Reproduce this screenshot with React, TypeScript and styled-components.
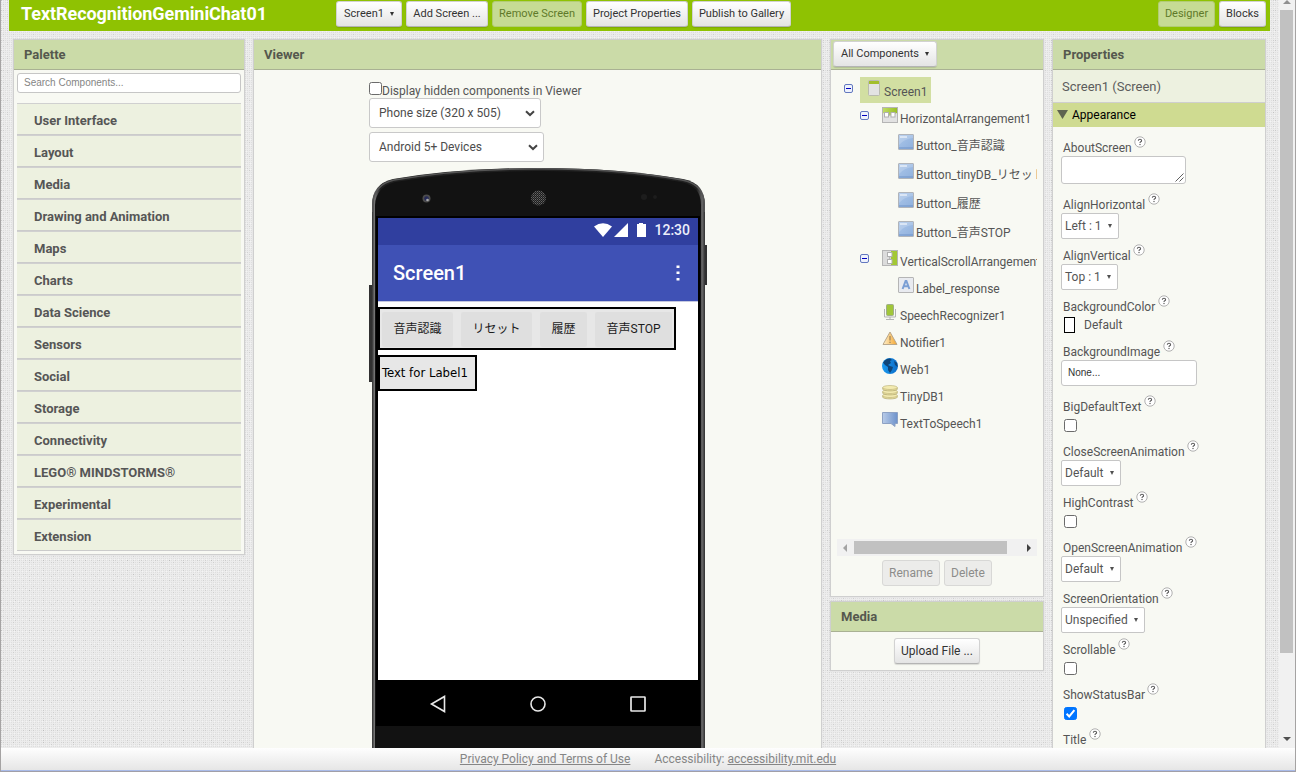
import React from "react";
import styled, { createGlobalStyle, css } from "styled-components";

const Global = createGlobalStyle`
  * { box-sizing: border-box; }
  body { margin: 0; overflow: hidden; font-family: Roboto, "Noto Sans CJK JP", sans-serif; font-size: 12px; color: #555; }
`;

const Frame = styled.div`
  display: flex;
  flex-direction: column;
  width: 1296px;
  height: 772px;
  border-left: 1px solid #a5a3a3;
  border-right: 1px solid #a5a3a3;
  border-bottom: 1px solid #a19fa8;
  overflow: hidden;
`;

const dot = (color: string) => `linear-gradient(${color}, ${color})`;

const Workspace = styled.div`
  display: flex;
  justify-content: space-between;
  height: 748px;
  flex: none;
  overflow: hidden;
  background-color: #ececec;
  background-image:
    radial-gradient(circle at 0.5px 0.5px, rgba(0, 0, 0, 0.09) 0.6px, transparent 0.7px),
    radial-gradient(circle at 0.5px 0.5px, rgba(0, 0, 0, 0.06) 0.6px, transparent 0.7px),
    radial-gradient(circle at 2.5px 4.5px, rgba(0, 0, 0, 0.07) 0.6px, transparent 0.7px),
    radial-gradient(circle at 6.5px 2.5px, rgba(0, 0, 0, 0.08) 0.6px, transparent 0.7px),
    radial-gradient(circle at 0.5px 0.5px, rgba(0, 0, 0, 0.06) 0.6px, transparent 0.7px),
    radial-gradient(circle at 1.5px 1.5px, rgba(255, 255, 255, 0.4) 0.6px, transparent 0.7px);
  background-size: 14px 10px, 6px 14px, 10px 6px, 22px 14px, 2px 2px, 4px 6px;
`;

const Page = styled.div`
  width: 1261px;
  margin-left: 8px;
`;

const TopBar = styled.header`
  display: flex;
  height: 31px;
  padding: 1px 4px 0 12px;
  background: #8fc202;
`;

const ProjectName = styled.h1`
  width: 315px;
  margin: 0;
  font-size: 18px;
  line-height: 26px;
  font-weight: 700;
  letter-spacing: -0.07px;
  color: #fff;
  white-space: nowrap;
`;

const ButtonGroup = styled.div<{ $end?: boolean }>`
  display: flex;
  gap: 4px;
  ${(p) => p.$end && css`margin-left: auto;`}
`;

const PushButton = styled.button<{ $w: number; $tone?: "green" | "gray"; $size?: number }>`
  display: flex;
  align-items: center;
  justify-content: center;
  gap: 6px;
  width: ${(p) => p.$w}px;
  height: 26px;
  padding: 0 0 1px;
  border: 1px solid #d2d2d2;
  border-bottom-color: #b4b4b4;
  border-radius: 3px;
  background: linear-gradient(#ffffff, #e4e4e4);
  box-shadow: 0 1px 1px rgba(0, 0, 0, 0.12);
  color: #333;
  font: ${(p) => p.$size ?? 11}px Roboto, sans-serif;
  white-space: nowrap;
  ${(p) => p.$tone === "green" && css`
    background: #c6db94; border-color: #b2cc74; color: #5f7a2a; box-shadow: none;
  `}
  ${(p) => p.$tone === "gray" && css`
    background: #ececea; border-color: #d8d8d6; color: #8c8c8a; box-shadow: none;
  `}
`;

const Arrow = styled.span<{ $color?: string }>`
  width: 0;
  height: 0;
  border: 2.5px solid transparent;
  border-top: 4px solid ${(p) => p.$color ?? "#333"};
  border-bottom: 0;
`;

const Columns = styled.main`
  display: flex;
  align-items: flex-start;
  padding: 8px 4px 0;
`;

const Panel = styled.section<{ $w: number; $h?: number; $ml?: number; $mt?: number }>`
  width: ${(p) => p.$w}px;
  height: ${(p) => (p.$h ? p.$h + "px" : "auto")};
  margin-left: ${(p) => p.$ml ?? 0}px;
  margin-top: ${(p) => p.$mt ?? 0}px;
  border: 1px solid #cfcfcf;
  background: #f8f9f3;
  box-shadow: 0 0 1px rgba(0, 0, 0, 0.12);
`;

const PanelHead = styled.div<{ $tight?: boolean }>`
  height: 30px;
  padding: ${(p) => (p.$tight ? "1px 0 0 2px" : "0 0 0 10px")};
  border-bottom: 1px solid #a9b193;
  background: #cbdba8;
  font-size: 13px;
  line-height: 30px;
  font-weight: 700;
  color: #55584e;
`;

const SearchBox = styled.div`
  height: 20px;
  margin: 3px 3px 10px;
  padding-left: 6px;
  border: 1px solid #c6c6c6;
  border-radius: 3px;
  background: #fff;
  font: 10px/18px "Liberation Sans", sans-serif;
  color: #858585;
`;

const Category = styled.div`
  height: 32px;
  margin: 0 3px;
  padding-left: 17px;
  border-top: 1px solid #d0d0d0;
  border-bottom: 1px solid #cbcbcb;
  background: #edf1e0;
  font-size: 13px;
  line-height: 33px;
  font-weight: 700;
  color: #565656;
`;

const ViewerBody = styled.div`
  display: flex;
  flex-direction: column;
  align-items: flex-start;
  padding: 12px 0 0 115px;
`;

const HiddenToggle = styled.label`
  display: flex;
  height: 16px;
  font-size: 12px;
  line-height: 18px;
  white-space: nowrap;
`;

const Check = styled.span<{ $on?: boolean }>`
  display: block;
  flex: none;
  width: 13px;
  height: 13px;
  border: 1px solid ${(p) => (p.$on ? "#0075ff" : "#6b6b6b")};
  border-radius: 2.5px;
  background: ${(p) => (p.$on ? "#0075ff" : "#fff")};
  svg { display: block; }
`;

const WideSelect = styled.div<{ $w: number }>`
  display: flex;
  align-items: center;
  justify-content: space-between;
  width: ${(p) => p.$w}px;
  height: 30px;
  margin-bottom: 4px;
  padding: 0 5px 0 9px;
  border: 1px solid #c9c9c9;
  border-radius: 3px;
  background: #fff;
  color: #4c4c4c;
`;

const Phone = styled.div`
  position: relative;
  width: 338px;
  height: 582px;
  margin-top: 1px;
  padding: 51px 0 0 9px;
`;

const PhoneShell = styled.svg`
  position: absolute;
  left: 0;
  top: 0;
`;

const PhoneScreen = styled.div`
  position: relative;
  width: 320px;
  height: 462px;
  background: #fff;
`;

const StatusBar = styled.div`
  display: flex;
  align-items: center;
  justify-content: flex-end;
  gap: 2px;
  height: 27px;
  padding: 0 8px 3px 0;
  background: #303f9f;
  color: #eceefa;
  font-size: 14px;
  font-weight: 500;
`;

const TitleBar = styled.div`
  display: flex;
  align-items: center;
  justify-content: space-between;
  height: 57px;
  padding: 0 18px 0 15px;
  border-bottom: 1px solid #c5c9e0;
  background: #3f51b5;
  color: #fff;
  font-size: 20px;
  font-weight: 500;
`;

const Arrangement = styled.div<{ $w: number; $h: number }>`
  display: flex;
  width: ${(p) => p.$w}px;
  height: ${(p) => p.$h}px;
  margin-top: 5px;
  padding: 3px 2px 2px 2px;
  border: 2px solid #000;
  background: #e7e7e7;
`;

const AppButton = styled.div<{ $w: number; $gap: number }>`
  width: ${(p) => p.$w}px;
  height: 35px;
  margin-right: ${(p) => p.$gap}px;
  border-radius: 2px;
  background: #dfdfdf;
  color: #1c1c1c;
  text-align: center;
  font-size: 12px;
  line-height: 34px;
  white-space: nowrap;
`;

const AppLabel = styled.div`
  color: #000;
  font-family: "DejaVu Sans", sans-serif;
  font-stretch: condensed;
  font-size: 13px;
  line-height: 26px;
  white-space: nowrap;
`;

const NavBar = styled.div`
  position: relative;
  display: flex;
  align-items: center;
  justify-content: space-between;
  width: 320px;
  height: 46px;
  padding: 2px 51px 0 51px;
`;

const Stack = styled.div`
  margin-left: 8px;
`;

const Tree = styled.div`
  height: 462px;
  margin: 7px 6px 0;
  overflow: hidden;
`;

const TreeRow = styled.div<{ $indent: number; $tall?: boolean }>`
  display: flex;
  height: ${(p) => (p.$tall ? 29 : 27)}px;
  padding-left: ${(p) => p.$indent}px;
  white-space: nowrap;
`;

const Toggle = styled.svg`
  flex: none;
  width: 9px;
  height: 9px;
  margin: 7px 7px 0 0;
`;

const NodeLabel = styled.div<{ $selected?: boolean }>`
  display: flex;
  height: 26px;
  padding: 0 4px 0 6px;
  background: ${(p) => (p.$selected ? "#d2dfa2" : "transparent")};
  font-size: 12px;
  line-height: 30px;
  svg { flex: none; margin: 3px 2px 0 0; }
`;

const HScroll = styled.div`
  display: flex;
  align-items: center;
  justify-content: space-between;
  height: 17px;
  margin: 0 6px;
  padding: 0 6px;
  background: #f1f1f1;
`;

const HThumb = styled.div`
  width: 153px;
  height: 13px;
  margin-right: 14px;
  background: #c1c1c1;
`;

const SideArrow = styled.span<{ $left?: boolean }>`
  width: 0;
  height: 0;
  border: 4px solid transparent;
  ${(p) => (p.$left ? css`border-right: 4px solid #a3a3a3; border-left: 0;` : css`border-left: 4px solid #404040; border-right: 0;`)}
`;

const CenterRow = styled.div<{ $top: number }>`
  display: flex;
  justify-content: center;
  gap: 4px;
  padding-top: ${(p) => p.$top}px;
`;

const Selected = styled.div`
  height: 33px;
  padding-left: 9px;
  border-bottom: 1px solid #cfcfcf;
  background: #edf1e0;
  font-size: 13px;
  line-height: 34px;
  color: #5c5c5c;
`;

const SectionHead = styled.div`
  display: flex;
  align-items: center;
  gap: 4px;
  height: 24px;
  margin-bottom: 11px;
  padding: 0 0 1px 4px;
  background: #cfdb91;
  font-size: 12px;
  color: #000;
`;

const Prop = styled.div<{ $h: number }>`
  height: ${(p) => p.$h}px;
  padding-left: 8px;
`;

const PropName = styled.div`
  display: flex;
  height: 18px;
  padding-left: 2px;
  font-size: 12px;
  line-height: 20px;
  svg { margin: -2px 0 0 2.5px; }
`;

const Choice = styled.div<{ $w: number }>`
  display: flex;
  align-items: center;
  justify-content: space-between;
  width: ${(p) => p.$w}px;
  height: 26px;
  padding: 0 6px 0 3px;
  border: 1px solid #c6c6c6;
  border-radius: 2px;
  background: #fff;
  font-size: 12px;
`;

const AreaBox = styled.div`
  display: flex;
  align-items: flex-end;
  justify-content: flex-end;
  width: 125px;
  height: 28px;
  padding: 1px;
  border: 1px solid #c6c6c6;
  border-radius: 3px;
  background: #fff;
`;

const FileBox = styled.div`
  width: 136px;
  height: 26px;
  padding-left: 6px;
  border: 1px solid #c6c6c6;
  border-radius: 3px;
  background: #fff;
  font: 10px/24px "Liberation Sans", sans-serif;
  color: #333;
`;

const ColorRow = styled.div`
  display: flex;
  gap: 9px;
  padding: 2px 0 0 3px;
  line-height: 16px;
`;

const Swatch = styled.span`
  width: 11px;
  height: 16px;
  border: 1px solid #000;
  background: #fff;
`;

const CheckSlot = styled.div`
  padding: 4px 0 0 3px;
`;

const VScroll = styled.div`
  display: flex;
  flex-direction: column;
  align-items: center;
  width: 16px;
  padding: 0 1px 7px 0;
  background: #f1f1f1;
  justify-content: space-between;
`;

const VArrow = styled.span<{ $up?: boolean }>`
  width: 0;
  height: 0;
  border: 4px solid transparent;
  ${(p) => (p.$up ? css`border-bottom: 4px solid #909090; border-top: 0;` : css`border-top: 4px solid #505050; border-bottom: 0;`)}
`;

const VThumb = styled.div`
  width: 13px;
  height: 643px;
  margin: 6px 0 auto;
  background: ${dot("#c1c1c1")};
`;

const Footer = styled.footer`
  display: flex;
  justify-content: center;
  gap: 24px;
  height: 23px;
  flex: none;
  border-bottom: 1px solid #a9bbe9;
  background: linear-gradient(#fefefe, #e6e6e6);
  font-size: 12px;
  line-height: 22px;
  color: #858585;
  a { color: #858585; text-decoration: underline; }
`;

const Help = () => (
  <svg width="12" height="12" viewBox="0 0 12 12">
    <circle cx="6" cy="6" r="5.2" fill="#fff" stroke="#a8a8a8" strokeWidth="0.9" />
    <path d="M4.3 4.700Q4.400 3.300 6 3.300T7.600 4.700Q7.600 5.400 6.700 5.800Q6 6.200 6 7" fill="none" stroke="#5c5c5c" strokeWidth="1.1" />
    <rect x="5.4" y="7.9" width="1.2" height="1.2" fill="#5c5c5c" />
  </svg>
);

const Chevron = () => (
  <svg width="10" height="7" viewBox="0 0 10 7">
    <path d="M1 1.2L5 5L9 1.2" fill="none" stroke="#444" strokeWidth="2" />
  </svg>
);

const Minus = () => (
  <Toggle viewBox="0 0 9 9">
    <rect x="0.5" y="0.5" width="8" height="8" rx="1.5" fill="#eef2fc" stroke="#6378bf" />
    <path d="M2 4.5H7" stroke="#0000c0" />
  </Toggle>
);

type IconKind = "screen" | "horiz" | "button" | "vert" | "label" | "mic" | "warn" | "web" | "db" | "speech";

const icons: Record<IconKind, React.ReactNode> = {
  screen: (
    <>
      <rect x="2.5" y="0.5" width="11" height="15" rx="1" fill="#e3e3e3" stroke="#b9bbae" />
      <path d="M3 1H13V4H3Z" fill="#a3bf2c" />
    </>
  ),
  horiz: (
    <>
      <rect x="0.5" y="0.5" width="15" height="15" fill="#e2e2e2" stroke="#b5b5b5" />
      <path d="M1 1H15V6L8 8.500L1 6Z" fill="url(#green)" />
      <rect x="2.5" y="5.5" width="4" height="4.500" fill="#fff" stroke="#b0b0b0" />
      <rect x="9" y="5.5" width="4" height="4.500" fill="#fff" stroke="#b0b0b0" />
      <path d="M7 8H8.500" stroke="#b0b0b0" />
    </>
  ),
  button: (
    <>
      <rect x="0.5" y="0.5" width="15" height="15" rx="0.5" fill="url(#blue)" stroke="#b0b4ba" />
      <path d="M1 1H15V4Q6 5 1 11Z" fill="#fff" opacity="0.18" />
      <rect x="2" y="2" width="7" height="2" fill="#fff" opacity="0.5" />
      <path d="M1 14H15" stroke="#6f93c9" />
    </>
  ),
  vert: (
    <>
      <rect x="0.5" y="0.5" width="15" height="15" fill="#dcdcdc" stroke="#b5b5b5" />
      <path d="M9 1H15V15H9Z" fill="#a3c834" />
      <rect x="5.5" y="2.5" width="4.5" height="4" fill="#fff" stroke="#b0b0b0" />
      <rect x="5.5" y="9.5" width="4.5" height="4" fill="#fff" stroke="#b0b0b0" />
      <path d="M7.700 7V9" stroke="#b0b0b0" />
    </>
  ),
  label: (
    <>
      <rect x="0.5" y="0.5" width="15" height="15" rx="0.5" fill="#e9ebf0" stroke="#b5b5b5" />
      <path d="M4.600 12L7.600 4H8.400L11.400 12M5.800 9.200H10.200" fill="none" stroke="#7b9fd4" strokeWidth="2" />
    </>
  ),
  mic: (
    <>
      <path d="M2.5 5V13H13.5V5M8 13V15M4 15.5H12" fill="none" stroke="#b4b4b4" />
      <rect x="4.5" y="0.5" width="7" height="11" rx="1" fill="#a1c639" stroke="#9fae88" />
    </>
  ),
  warn: (
    <>
      <path d="M8 1L15 13.500H1Z" fill="url(#amber)" stroke="#b9a88c" />
      <path d="M8 5V9.500M8 10.700V12" stroke="#8a7550" strokeWidth="1" />
    </>
  ),
  web: (
    <>
      <circle cx="8" cy="8" r="8" fill="url(#ocean)" />
      <path d="M1 4.500Q4 0.300 8 0.500L10 2L8 3L9 5L6 7L8 8L11 9L10 12L8 15L6 12L6 9L3 7Z" fill="#0f4579" />
      <path d="M12 3L15 5L15.600 9L13 7Z" fill="#0f4579" />
    </>
  ),
  db: (
    <>
      {[10.5, 6.5, 2.5].map((y) => (
        <g key={y}>
          <path d={`M0.7 ${y}V${y + 1.6}C0.7 ${y + 4} 15.3 ${y + 4} 15.3 ${y + 1.6}V${y}`} fill="#e8df97" stroke="#b9b07a" strokeWidth="0.8" />
          <ellipse cx="8" cy={y} rx="7.3" ry="2" fill="#f3ebb0" stroke="#c1b881" strokeWidth="0.7" />
        </g>
      ))}
    </>
  ),
  speech: <path d="M0.5 0.5H15.5V11.5H13V14.5L9 11.5H0.5Z" fill="url(#blueSide)" stroke="#8ea2c4" />,
};

const NodeIcon = ({ kind }: { kind: IconKind }) => (
  <svg width="16" height="16" viewBox="0 0 16 16">
    <defs>
      <linearGradient id="blue" x1="0" y1="0" x2="1" y2="1">
        <stop offset="0" stopColor="#aac6ea" />
        <stop offset="1" stopColor="#8fb0dc" />
      </linearGradient>
      <linearGradient id="blueSide">
        <stop offset="0" stopColor="#b9cce8" />
        <stop offset="1" stopColor="#6d92cb" />
      </linearGradient>
      <linearGradient id="amber">
        <stop offset="0" stopColor="#fff0cd" />
        <stop offset="1" stopColor="#f4a62e" />
      </linearGradient>
      <linearGradient id="green">
        <stop offset="0" stopColor="#c0dc66" />
        <stop offset="1" stopColor="#98bf25" />
      </linearGradient>
      <linearGradient id="ocean">
        <stop offset="0" stopColor="#1a9af0" />
        <stop offset="1" stopColor="#0a6cc8" />
      </linearGradient>
    </defs>
    {icons[kind]}
  </svg>
);

const categories = [
  "User Interface", "Layout", "Media", "Drawing and Animation", "Maps", "Charts", "Data Science",
  "Sensors", "Social", "Storage", "Connectivity", "LEGO® MINDSTORMS®", "Experimental", "Extension",
];

type Node = { name: string; icon: IconKind; indent: number; open?: boolean; tall?: boolean; selected?: boolean };

const nodes: Node[] = [
  { name: "Screen1", icon: "screen", indent: 7, open: true, selected: true },
  { name: "HorizontalArrangement1", icon: "horiz", indent: 23, open: true },
  { name: "Button_音声認識", icon: "button", indent: 55, tall: true },
  { name: "Button_tinyDB_リセット", icon: "button", indent: 55, tall: true },
  { name: "Button_履歴", icon: "button", indent: 55, tall: true },
  { name: "Button_音声STOP", icon: "button", indent: 55, tall: true },
  { name: "VerticalScrollArrangement1", icon: "vert", indent: 23, open: true },
  { name: "Label_response", icon: "label", indent: 55 },
  { name: "SpeechRecognizer1", icon: "mic", indent: 39 },
  { name: "Notifier1", icon: "warn", indent: 39 },
  { name: "Web1", icon: "web", indent: 39 },
  { name: "TinyDB1", icon: "db", indent: 39 },
  { name: "TextToSpeech1", icon: "speech", indent: 39 },
];

const Pick = ({ w, children }: { w: number; children: string }) => (
  <Choice $w={w}>
    {children}
    <Arrow $color="#505050" />
  </Choice>
);

const Box = ({ on }: { on?: boolean }) => (
  <CheckSlot>
    <Check $on={on}>
      {on && (
        <svg width="11" height="11" viewBox="0 0 11 11">
          <path d="M1.600 5.800L4.200 8.400L9.400 2.200" fill="none" stroke="#fff" strokeWidth="2" />
        </svg>
      )}
    </Check>
  </CheckSlot>
);

const properties: { name: string; h: number; control?: React.ReactNode }[] = [
  {
    name: "AboutScreen",
    h: 57,
    control: (
      <AreaBox>
        <svg width="9" height="9" viewBox="0 0 9 9">
          <path d="M0.5 8.5L8.5 0.5M4.5 8.5L8.5 4.5" stroke="#606060" />
        </svg>
      </AreaBox>
    ),
  },
  { name: "AlignHorizontal", h: 51, control: <Pick w={58}>Left : 1</Pick> },
  { name: "AlignVertical", h: 51, control: <Pick w={57}>Top : 1</Pick> },
  { name: "BackgroundColor", h: 45, control: <ColorRow><Swatch />Default</ColorRow> },
  { name: "BackgroundImage", h: 55, control: <FileBox>None...</FileBox> },
  { name: "BigDefaultText", h: 45, control: <Box /> },
  { name: "CloseScreenAnimation", h: 51, control: <Pick w={60}>Default</Pick> },
  { name: "HighContrast", h: 45, control: <Box /> },
  { name: "OpenScreenAnimation", h: 51, control: <Pick w={60}>Default</Pick> },
  { name: "ScreenOrientation", h: 51, control: <Pick w={84}>Unspecified</Pick> },
  { name: "Scrollable", h: 45, control: <Box /> },
  { name: "ShowStatusBar", h: 45, control: <Box on /> },
  { name: "Title", h: 45 },
];

const Shell = () => (
  <PhoneShell width="338" height="582" viewBox="0 0 338 582">
    <defs>
      <linearGradient id="rim">
        <stop offset="0" stopColor="#303030" />
        <stop offset="0.008" stopColor="#777" />
        <stop offset="0.025" stopColor="#202020" />
        <stop offset="0.975" stopColor="#202020" />
        <stop offset="0.992" stopColor="#666" />
        <stop offset="1" stopColor="#303030" />
      </linearGradient>
      <pattern id="grille" width="2" height="2" patternUnits="userSpaceOnUse">
        <rect width="2" height="2" fill="#1c1c1c" />
        <rect width="1" height="1" fill="#666" />
        <rect x="1" y="1" width="1" height="1" fill="#484848" />
      </pattern>
    </defs>
    <rect x="0" y="118" width="4" height="97" fill="#303030" />
    <rect x="334" y="78" width="4" height="40" fill="#303030" />
    <path d="M3 582V38Q3 17 24 12Q90 1 170 1T314 12Q336 16 336 38V582Z" fill="url(#rim)" />
    <path d="M3.8 45V38Q4 18 25 13Q90 1.800 170 1.800T313 13Q335 17 335.200 38V45" fill="none" stroke="#555" strokeWidth="1.4" />
    <path d="M6 582V38Q7 20 26 15Q90 4 170 4T312 15Q332 19 332 38V582Z" fill="#121212" />
    <circle cx="57.5" cy="31.5" r="4" fill="#4c4c4c" />
    <circle cx="57.5" cy="31.5" r="2.3" fill="#252a58" />
    <circle cx="58.5" cy="33" r="1.3" fill="#aaa" />
    <circle cx="169.5" cy="31" r="7.5" fill="url(#grille)" />
    <circle cx="275" cy="30" r="3" fill="#1d1d1d" />
    <circle cx="286" cy="30" r="2" fill="#1d1d1d" />
    <rect x="7" y="49" width="324" height="510" fill="#000" />
  </PhoneShell>
);

export default function App() {
  return (
    <Frame>
      <Global />
      <Workspace>
        <Page>
          <TopBar>
            <ProjectName>TextRecognitionGeminiChat01</ProjectName>
            <ButtonGroup>
              <PushButton $w={66}>Screen1 <Arrow /></PushButton>
              <PushButton $w={82}>Add Screen ...</PushButton>
              <PushButton $w={90} $tone="green">Remove Screen</PushButton>
              <PushButton $w={102}>Project Properties</PushButton>
              <PushButton $w={99}>Publish to Gallery</PushButton>
            </ButtonGroup>
            <ButtonGroup $end>
              <PushButton $w={57} $tone="green">Designer</PushButton>
              <PushButton $w={47}>Blocks</PushButton>
            </ButtonGroup>
          </TopBar>
          <Columns>
            <Panel $w={232} $h={516}>
              <PanelHead>Palette</PanelHead>
              <SearchBox>Search Components...</SearchBox>
              {categories.map((c) => <Category key={c}>{c}</Category>)}
            </Panel>
            <Panel $w={569} $h={730} $ml={8}>
              <PanelHead>Viewer</PanelHead>
              <ViewerBody>
                <HiddenToggle><Check />Display hidden components in Viewer</HiddenToggle>
                <WideSelect $w={172}>Phone size (320 x 505)<Chevron /></WideSelect>
                <WideSelect $w={175}>Android 5+ Devices<Chevron /></WideSelect>
                <Phone>
                  <Shell />
                  <PhoneScreen>
                    <StatusBar>
                      <svg width="58" height="16" viewBox="0 0 58 16">
                        <path d="M0 4.500Q9 -1.800 18 4.500L9 15Z" fill="#fff" />
                        <path d="M20 15L34 1V15Z" fill="#fff" />
                        <path d="M43 2H45V1H49V2H52V15H43Z" fill="#fff" />
                      </svg>
                      12:30
                    </StatusBar>
                    <TitleBar>
                      Screen1
                      <svg width="4" height="16" viewBox="0 0 4 16">
                        <path d="M0.500 0.500H3.500V3H0.500ZM0.500 6.500H3.500V9H0.500ZM0.500 13H3.500V15.500H0.500Z" fill="#fff" />
                      </svg>
                    </TitleBar>
                    <Arrangement $w={298} $h={43}>
                      <AppButton $w={71} $gap={8}>音声認識</AppButton>
                      <AppButton $w={71} $gap={8}>リセット</AppButton>
                      <AppButton $w={47} $gap={8}>履歴</AppButton>
                      <AppButton $w={77} $gap={0}>音声STOP</AppButton>
                    </Arrangement>
                    <Arrangement $w={99} $h={36}>
                      <AppLabel>Text for Label1</AppLabel>
                    </Arrangement>
                  </PhoneScreen>
                  <NavBar>
                    <svg width="18" height="18" viewBox="0 0 18 18"><path d="M15.500 1.500V16.500L2.500 9Z" fill="none" stroke="#e8e8e8" strokeWidth="1.600" /></svg>
                    <svg width="18" height="18" viewBox="0 0 18 18"><circle cx="9" cy="9" r="7" fill="none" stroke="#e8e8e8" strokeWidth="1.600" /></svg>
                    <svg width="18" height="18" viewBox="0 0 18 18"><rect x="2" y="2" width="14" height="14" rx="0.500" fill="none" stroke="#e8e8e8" strokeWidth="1.700" /></svg>
                  </NavBar>
                </Phone>
              </ViewerBody>
            </Panel>
            <Stack>
              <Panel $w={214} $h={558}>
                <PanelHead $tight><PushButton $w={104}>All Components <Arrow /></PushButton></PanelHead>
                <Tree>
                  {nodes.map((n) => (
                    <TreeRow key={n.name} $indent={n.indent} $tall={n.tall}>
                      {n.open && <Minus />}
                      <NodeLabel $selected={n.selected}>
                        <NodeIcon kind={n.icon} />
                        {n.name}
                      </NodeLabel>
                    </TreeRow>
                  ))}
                </Tree>
                <HScroll><SideArrow $left /><HThumb /><SideArrow /></HScroll>
                <CenterRow $top={4}>
                  <PushButton $w={58} $size={12} $tone="gray">Rename</PushButton>
                  <PushButton $w={48} $size={12} $tone="gray">Delete</PushButton>
                </CenterRow>
              </Panel>
              <Panel $w={214} $h={70} $mt={4}>
                <PanelHead>Media</PanelHead>
                <CenterRow $top={6}><PushButton $w={86} $size={12}>Upload File ...</PushButton></CenterRow>
              </Panel>
            </Stack>
            <Panel $w={214} $h={730} $ml={8}>
              <PanelHead>Properties</PanelHead>
              <Selected>Screen1 (Screen)</Selected>
              <SectionHead>
                <svg width="11" height="9" viewBox="0 0 11 9"><path d="M0 0H11L5.500 9Z" fill="#5f6450" /></svg>
                Appearance
              </SectionHead>
              {properties.map((p) => (
                <Prop key={p.name} $h={p.h}>
                  <PropName>{p.name}<Help /></PropName>
                  {p.control}
                </Prop>
              ))}
            </Panel>
          </Columns>
        </Page>
        <VScroll><VArrow $up /><VThumb /><VArrow /></VScroll>
      </Workspace>
      <Footer>
        <a>Privacy Policy and Terms of Use</a>
        <span>Accessibility: <a>accessibility.mit.edu</a></span>
      </Footer>
    </Frame>
  );
}
